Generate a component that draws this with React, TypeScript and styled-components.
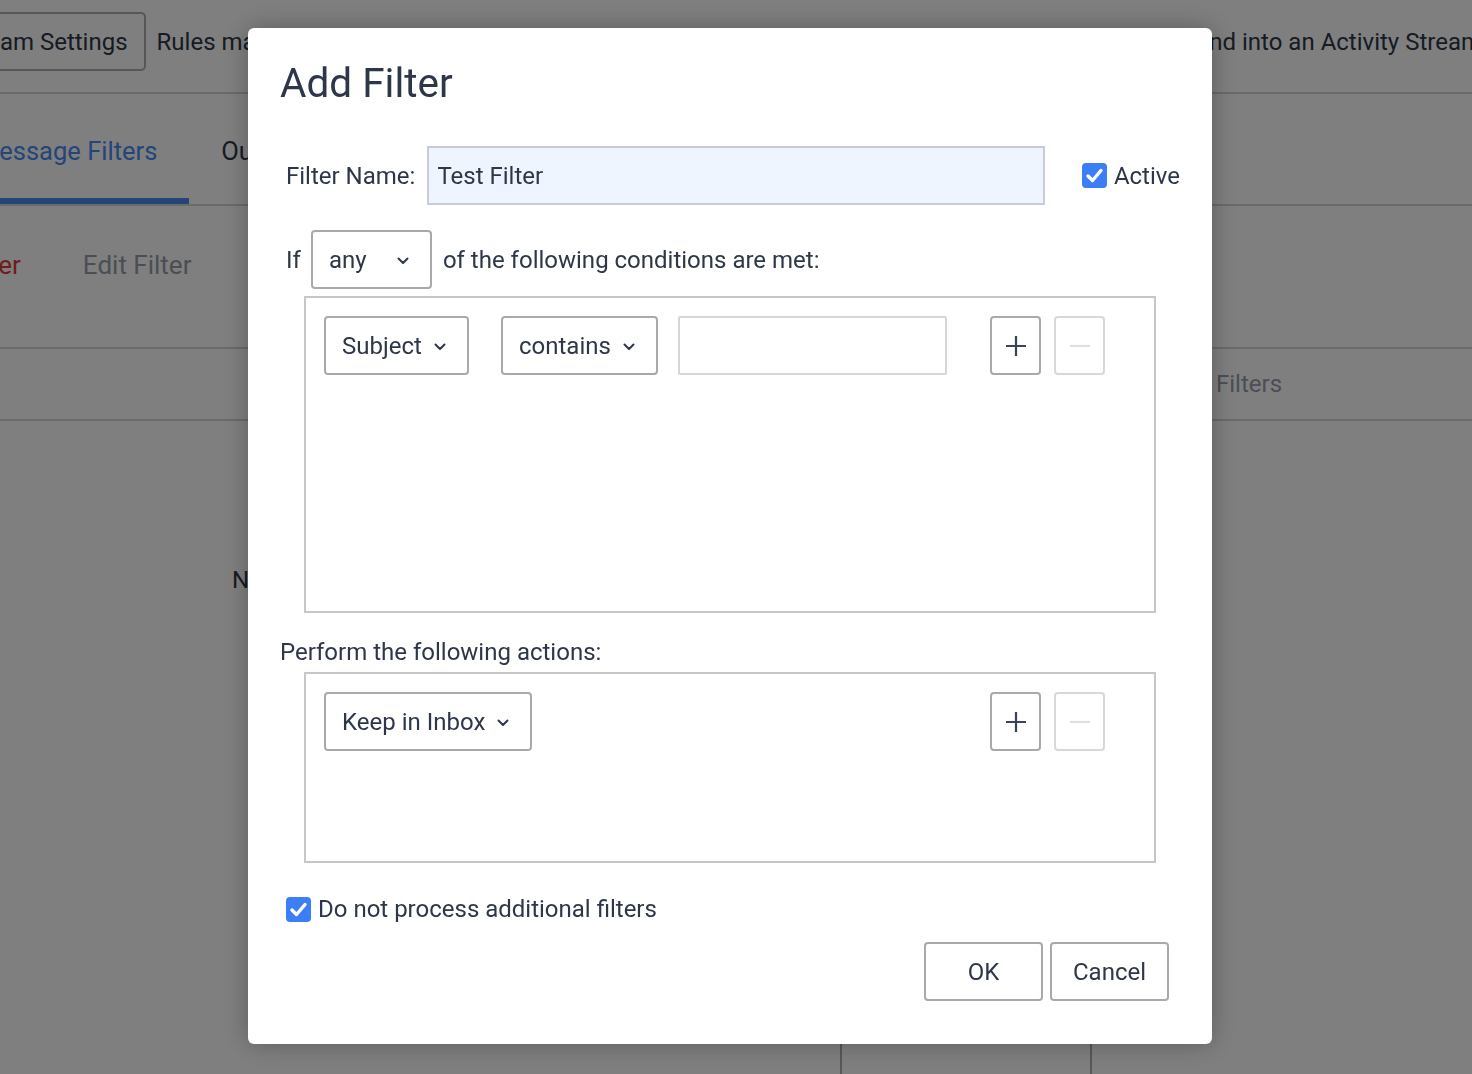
import { styled, createGlobalStyle } from "styled-components";

const GlobalStyle = createGlobalStyle`
  html, body {
    margin: 0;
    padding: 0;
  }
  body {
    font-family: Roboto, "Liberation Sans", sans-serif;
    color: #2d3748;
    background: #ffffff;
    overflow: hidden;
  }
  * {
    box-sizing: border-box;
  }
`;

const Chevron = () => (
  <svg width="12" height="8" viewBox="0 0 12 8" fill="none">
    <path
      d="M1.5 1.5 L6 6 L10.5 1.5"
      stroke="#2d3748"
      strokeWidth="2"
      strokeLinecap="round"
      strokeLinejoin="round"
    />
  </svg>
);

const PlusIcon = () => (
  <svg width="22" height="22" viewBox="0 0 22 22">
    <path d="M11 1 V21 M1 11 H21" stroke="#3a4356" strokeWidth="2.2" />
  </svg>
);

const MinusIcon = () => (
  <svg width="22" height="22" viewBox="0 0 22 22">
    <path d="M1 11 H21" stroke="#e0e0e0" strokeWidth="2.2" />
  </svg>
);

const CheckMark = () => (
  <svg width="25" height="25" viewBox="0 0 25 25">
    <path
      d="M6 13 L10.5 17.5 L19 7.5"
      stroke="#ffffff"
      strokeWidth="3.4"
      fill="none"
      strokeLinecap="round"
      strokeLinejoin="round"
    />
  </svg>
);

export default function App() {
  return (
    <>
      <GlobalStyle />
      <Page>
        <HeaderBar>
          <TeamButton>Team Settings</TeamButton>
          <HeaderText>Rules made here will sort your incoming messages</HeaderText>
          <HeaderRight>and into an Activity Stream</HeaderRight>
        </HeaderBar>
        <TabsBar>
          <Tab $active>Message Filters</Tab>
          <Tab>Outgoing Filters</Tab>
        </TabsBar>
        <SubBar>
          <SubLink $danger>Add Filter</SubLink>
          <SubLink>Edit Filter</SubLink>
          <SubLink>Delete Filter</SubLink>
        </SubBar>
        <TableHead>
          <HeadCell $pad={300}>Name</HeadCell>
          <HeadCell>Conditions</HeadCell>
          <HeadCell $pad={126}>Filters</HeadCell>
        </TableHead>
        <EmptyText>No message filters have been created yet.</EmptyText>
        <TableFoot>
          <FootCell />
          <FootCell $line />
          <FootCell $line />
        </TableFoot>
      </Page>

      <Overlay>
        <Modal>
          <Title>Add Filter</Title>

          <NameRow>
            <Label>Filter Name:</Label>
            <NameInput>Test Filter</NameInput>
            <CheckLabel $gap={37}>
              <CheckBox>
                <CheckMark />
              </CheckBox>
              Active
            </CheckLabel>
          </NameRow>

          <IfRow>
            <Label>If</Label>
            <Select $width={121} $gap={30} $ml={10}>
              any
              <Chevron />
            </Select>
            <Sentence>of the following conditions are met:</Sentence>
          </IfRow>

          <RuleBox $height={317}>
            <RuleRow>
              <Select $width={145} $gap={12}>
                Subject
                <Chevron />
              </Select>
              <Select $width={157} $gap={12} $ml={32}>
                contains
                <Chevron />
              </Select>
              <ValueInput />
              <ButtonPair>
                <IconButton>
                  <PlusIcon />
                </IconButton>
                <IconButton disabled>
                  <MinusIcon />
                </IconButton>
              </ButtonPair>
            </RuleRow>
          </RuleBox>

          <SectionLabel>Perform the following actions:</SectionLabel>

          <RuleBox $height={191} $mt={6}>
            <RuleRow>
              <Select $width={208} $gap={12}>
                Keep in Inbox
                <Chevron />
              </Select>
              <ButtonPair>
                <IconButton>
                  <PlusIcon />
                </IconButton>
                <IconButton disabled>
                  <MinusIcon />
                </IconButton>
              </ButtonPair>
            </RuleRow>
          </RuleBox>

          <StopRow>
            <CheckLabel>
              <CheckBox>
                <CheckMark />
              </CheckBox>
              Do not process additional filters
            </CheckLabel>
          </StopRow>

          <Footer>
            <DialogButton>OK</DialogButton>
            <DialogButton>Cancel</DialogButton>
          </Footer>
        </Modal>
      </Overlay>
    </>
  );
}

/* background page */

const Page = styled.div`
  width: 1472px;
  height: 1074px;
  overflow: hidden;
  display: flex;
  flex-direction: column;
  font-size: 24px;
  line-height: 28px;
`;

const HeaderBar = styled.div`
  height: 94px;
  margin-left: -44px;
  padding-top: 12px;
  display: flex;
  align-items: flex-start;
  border-bottom: 2px solid #d4d4d4;
  white-space: nowrap;
  overflow: hidden;
`;

const TeamButton = styled.div`
  height: 59px;
  padding: 0 16px;
  display: flex;
  align-items: center;
  border: 2px solid #aeaeae;
  border-radius: 5px;
  flex-shrink: 0;
`;

const HeaderText = styled.div`
  margin-left: 11px;
  height: 59px;
  display: flex;
  align-items: center;
`;

const HeaderRight = styled.div`
  margin-left: auto;
  margin-right: -10px;
  height: 59px;
  display: flex;
  align-items: center;
  flex-shrink: 0;
`;

const TabsBar = styled.div`
  height: 112px;
  margin-left: -55px;
  display: flex;
  border-bottom: 2px solid #d4d4d4;
  font-size: 25.5px;
`;

const Tab = styled.div<{ $active?: boolean }>`
  padding: 10px 32px 0;
  display: flex;
  align-items: center;
  white-space: nowrap;
  color: ${(p) => (p.$active ? "#4a8af0" : "#2d3748")};
  border-bottom: 6px solid ${(p) => (p.$active ? "#4a8af0" : "transparent")};
`;

const SubBar = styled.div`
  height: 143px;
  margin-left: -90px;
  padding-top: 45px;
  display: flex;
  gap: 62px;
  border-bottom: 2px solid #d4d4d4;
  white-space: nowrap;
  font-size: 26px;
`;

const SubLink = styled.span<{ $danger?: boolean }>`
  color: ${(p) => (p.$danger ? "#dc3a3a" : "#979cab")};
`;

const TableHead = styled.div`
  height: 72px;
  display: grid;
  grid-template-columns: 840px 250px 1fr;
  align-items: center;
  border-bottom: 2px solid #d4d4d4;
  color: #979cab;
`;

const HeadCell = styled.div<{ $pad?: number }>`
  padding-left: ${(p) => p.$pad ?? 24}px;
  white-space: nowrap;
`;

const EmptyText = styled.div`
  margin-top: 145px;
  padding-left: 232px;
  white-space: nowrap;
`;

const TableFoot = styled.div`
  margin-top: auto;
  height: 90px;
  display: grid;
  grid-template-columns: 840px 250px 1fr;
`;

const FootCell = styled.div<{ $line?: boolean }>`
  border-left: ${(p) => (p.$line ? "2px solid #b0b0b0" : "none")};
`;

/* dialog */

const Overlay = styled.div`
  position: fixed;
  inset: 0;
  background: rgba(0, 0, 0, 0.5);
  display: flex;
  justify-content: center;
  align-items: flex-start;
  padding: 28px 12px 0 0;
`;

const Modal = styled.div`
  width: 964px;
  height: 1016px;
  background: #ffffff;
  border-radius: 6px;
  box-shadow: 0 0 26px rgba(0, 0, 0, 0.28);
  padding: 30px 32px 0 33px;
  display: flex;
  flex-direction: column;
  font-size: 24px;
  line-height: 28px;
  color: #2d3748;
`;

const Title = styled.h1`
  margin: 0 0 0 -1px;
  font-size: 40.5px;
  line-height: 50px;
  font-weight: 400;
`;

const NameRow = styled.div`
  margin-top: 38px;
  height: 59px;
  display: flex;
  align-items: center;
`;

const Label = styled.span`
  padding-left: 5px;
  white-space: nowrap;
`;

const NameInput = styled.div`
  margin-left: 12px;
  width: 618px;
  height: 59px;
  padding-left: 8px;
  display: flex;
  align-items: center;
  background: #eff5fe;
  border: 2px solid #c9cdd3;
`;

const CheckLabel = styled.label<{ $gap?: number }>`
  margin-left: ${(p) => p.$gap ?? 0}px;
  display: flex;
  align-items: center;
  gap: 7px;
  white-space: nowrap;
`;

const CheckBox = styled.span`
  width: 25px;
  height: 25px;
  border-radius: 4px;
  background: #3b7ef6;
  display: flex;
  align-items: center;
  justify-content: center;
`;

const IfRow = styled.div`
  margin-top: 25px;
  height: 59px;
  display: flex;
  align-items: center;
`;

const Sentence = styled.span`
  margin-left: 11px;
  white-space: nowrap;
`;

const Select = styled.div<{ $width: number; $gap: number; $ml?: number }>`
  width: ${(p) => p.$width}px;
  height: 59px;
  margin-left: ${(p) => p.$ml ?? 0}px;
  padding: 0 0 0 16px;
  display: flex;
  align-items: center;
  gap: ${(p) => p.$gap}px;
  border: 2px solid #a9a9a9;
  border-radius: 4px;
  white-space: nowrap;
  flex-shrink: 0;

  svg {
    margin-top: 2px;
  }
`;

const RuleBox = styled.div<{ $height: number; $mt?: number }>`
  margin: ${(p) => p.$mt ?? 7}px 0 0 23px;
  width: 852px;
  height: ${(p) => p.$height}px;
  border: 2px solid #c6c6c6;
  padding: 18px 49px 18px 18px;
`;

const RuleRow = styled.div`
  display: flex;
  align-items: center;
`;

const ValueInput = styled.div`
  margin-left: 20px;
  width: 269px;
  height: 59px;
  border: 2px solid #d6d6d6;
  border-radius: 2px;
`;

const ButtonPair = styled.div`
  margin-left: auto;
  display: flex;
  gap: 13px;
`;

const IconButton = styled.button`
  width: 51px;
  height: 59px;
  padding: 0;
  background: #ffffff;
  border: 2px solid ${(p) => (p.disabled ? "#d8d8d8" : "#a9a9a9")};
  border-radius: 4px;
  display: flex;
  align-items: center;
  justify-content: center;
`;

const SectionLabel = styled.div`
  margin-top: 25px;
  margin-left: -1px;
  white-space: nowrap;
`;

const StopRow = styled.div`
  margin-top: 32px;
  padding-left: 5px;
  display: flex;
`;

const Footer = styled.div`
  margin-top: 19px;
  padding-right: 11px;
  display: flex;
  justify-content: flex-end;
  gap: 7px;
`;

const DialogButton = styled.button`
  width: 119px;
  height: 59px;
  background: #ffffff;
  border: 2px solid #a9a9a9;
  border-radius: 4px;
  font-family: inherit;
  font-size: 24px;
  color: #2d3748;
`;
